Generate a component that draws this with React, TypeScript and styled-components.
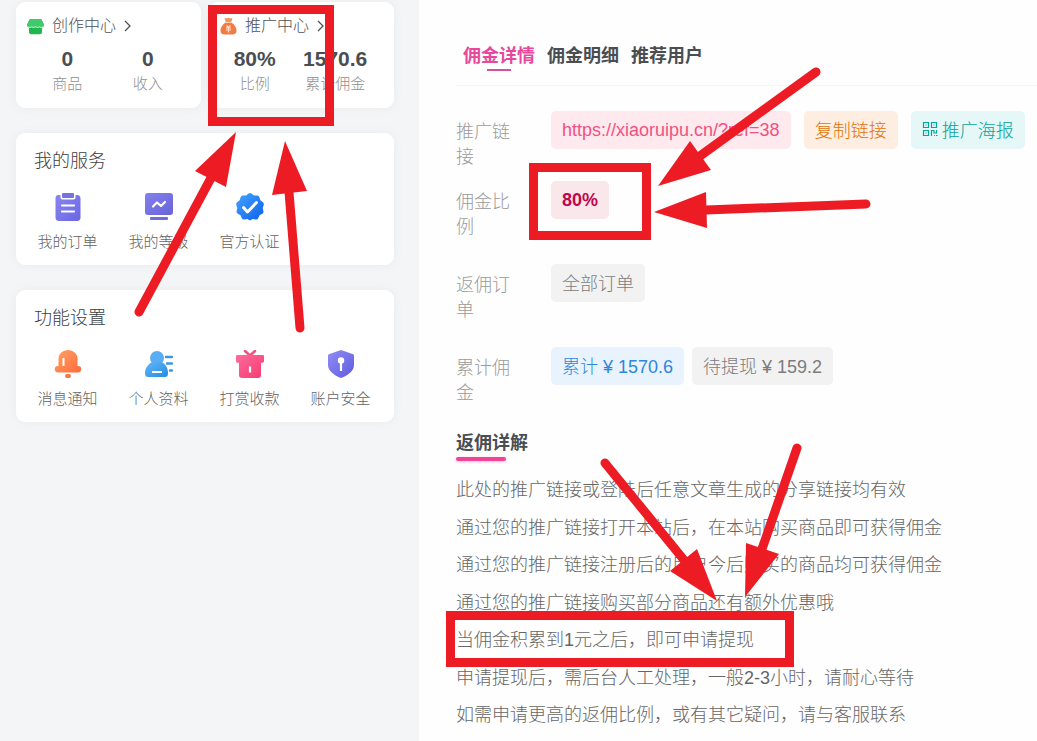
import React from "react";
import styled, { createGlobalStyle } from "styled-components";

const GlobalStyle = createGlobalStyle`
  *, *::before, *::after { box-sizing: border-box; }
  body {
    margin: 0;
    background: #f4f5f7;
    color: #4a4e52;
    font-family: "Liberation Sans", "Noto Sans CJK SC", sans-serif;
    font-weight: 300;
  }
  h2, h3, p, dl, dd, ul { margin: 0; padding: 0; }
  button { border: 0; padding: 0; background: none; font: inherit; color: inherit; cursor: pointer; }
  a { color: inherit; text-decoration: none; }
`;

const Page = styled.div`
  position: relative;
  display: flex;
  min-height: 100vh;
`;

const Sidebar = styled.aside`
  flex: 0 0 419px;
  display: flex;
  flex-direction: column;
  gap: 25px;
  padding: 2px 25px 25px 16px;
`;

const CardPair = styled.div`
  display: grid;
  grid-template-columns: 1fr 1fr;
  gap: 8px;
`;

const Card = styled.section`
  background: #fff;
  border-radius: 9px;
  box-shadow: 0 0 10px rgba(116, 116, 116, 0.08);
`;

const CenterCard = styled(Card)`
  padding: 12px 13px 12px 11px;
`;

const CenterLink = styled.a`
  display: flex;
  align-items: center;
  gap: 8px;
  font-size: 16px;
  line-height: 24px;
  color: #4e5256;

  svg:last-child { margin-left: -4px; }
`;

const Stats = styled.div`
  display: flex;
  justify-content: space-around;
  margin-top: 8px;
  text-align: center;
`;

const StatValue = styled.p`
  font-size: 21px;
  font-weight: 700;
  line-height: 26px;
`;

const StatLabel = styled.p`
  font-size: 15px;
  line-height: 24px;
  color: #909090;
`;

const MenuCard = styled(Card)`
  padding: 15px 8px 11px 6px;
`;

const MenuTitle = styled.h2`
  padding: 0 12px;
  font-size: 18px;
  font-weight: 300;
  line-height: 26px;
  color: #3c4044;
`;

const MenuGrid = styled.nav`
  display: grid;
  grid-template-columns: repeat(4, 1fr);
  margin-top: 19px;
`;

const MenuItem = styled.a`
  display: flex;
  flex-direction: column;
  align-items: center;
  gap: 9px;
  font-size: 15px;
  line-height: 24px;
  color: #636363;
`;

const Main = styled.main`
  flex: 1;
  min-width: 0;
  padding: 37px 0 8px 37px;
  background: #fefefe;
`;

const Tabs = styled.div`
  display: flex;
  gap: 12px;
  padding: 6px 7px 14px;
  border-bottom: 1px solid #f5f5f5;
`;

const Tab = styled.button<{ $active?: boolean }>`
  display: flex;
  flex-direction: column;
  align-items: center;
  font-size: 18px;
  font-weight: 700;
  line-height: 26px;
  color: ${(p) => (p.$active ? "#e8489b" : "#4a4e52")};

  &::after {
    content: "";
    width: 24px;
    height: 2px;
    background: ${(p) => (p.$active ? "#d6519a" : "transparent")};
  }
`;

const Details = styled.dl`
  display: flex;
  flex-direction: column;
  gap: 24px;
  padding: 25px 12px 0 0;
`;

const DetailRow = styled.div<{ $tight?: boolean }>`
  display: flex;
  align-items: flex-start;
  margin-bottom: ${(p) => (p.$tight ? "-13px" : "0")};
`;

const DetailLabel = styled.dt`
  flex: 0 0 95px;
  padding: 9px 36px 0 0;
  font-size: 18px;
  line-height: 25px;
  color: #9a9a9a;
`;

const DetailValue = styled.dd<{ $gap: number }>`
  display: flex;
  gap: ${(p) => p.$gap}px;
  white-space: nowrap;
`;

const tones = {
  pink: ["#fee9ef", "#f0527f"],
  orange: ["#feeee2", "#e07408"],
  teal: ["#e5f7f6", "#08a498"],
  crimson: ["#f9e7ea", "#c3044f"],
  grey: ["#f2f2f2", "#7c7c7c"],
  blue: ["#e8f3fe", "#2f86dc"],
};

const Chip = styled.a<{ $tone: keyof typeof tones; $latin?: boolean; $strong?: boolean }>`
  display: flex;
  align-items: center;
  gap: 3px;
  height: 38px;
  padding: ${(p) => (p.$latin ? "0 11px" : "0 11px 3px")};
  border-radius: 5px;
  background: ${(p) => tones[p.$tone][0]};
  color: ${(p) => tones[p.$tone][1]};
  font-size: 18px;
  font-weight: ${(p) => (p.$strong ? 700 : 300)};
`;

const NotesTitle = styled.h3`
  margin-top: 24px;
  font-size: 18px;
  line-height: 27px;

  &::after {
    content: "";
    display: block;
    width: 50px;
    height: 4px;
    border-radius: 2px;
    background: #f04494;
    box-shadow: 0 1px 3px rgba(253, 83, 161, 0.4);
  }
`;

const Notes = styled.ul`
  display: flex;
  flex-direction: column;
  justify-content: space-between;
  min-height: 251px;
  margin-top: 16px;
  list-style: none;
  font-size: 18px;
  line-height: 26px;
  color: #666;
`;

const Markup = styled.svg`
  position: absolute;
  top: 0;
  left: 0;
  pointer-events: none;
`;

const ShopIcon = () => (
  <svg width="17" height="17" viewBox="0 0 17 17" aria-hidden="true">
    <path d="M4 1h9c1 0 1.500.400 1.800 1.200L16.600 6c.5 1.600-.1 3.300-1.600 3.800V14c0 1.400-.8 2.200-2.200 2.200H4.200C2.800 16.200 2 15.400 2 14V9.800C.500 9.300-.1 7.600.400 6l1.800-3.800C2.500 1.400 3 1 4 1z" fill="#1fb84c" />
    <path d="M4 1h9c1 0 1.500.400 1.800 1.200L16.600 6c.4 1.400 0 2.600-1 3.300H1.400C.400 8.600 0 7.400.400 6l1.800-3.800C2.500 1.400 3 1 4 1z" fill="#3fcb6c" />
    <path d="M1 8.800q1.900 1.500 3.750 0 1.900 1.500 3.750 0 1.900 1.500 3.750 0 1.900 1.500 3.750 0" fill="none" stroke="#d9f8e2" strokeWidth=".9" />
  </svg>
);

const BagIcon = () => (
  <svg width="17" height="18" viewBox="0 0 17 18" aria-hidden="true">
    <path d="M4.500 1.500q1.500-1 2.500 0 1.500-1.500 3 0 1-1 2.500 0L11 5.500H6z" fill="#f3965a" />
    <path d="M5.500 5.500h6c3 2 5 5 5 8 0 2.500-1.500 4-4 4h-8c-2.500 0-4-1.500-4-4 0-3 2-6 5-8z" fill="#f07b43" />
    <path d="M5 5.500h7" stroke="#fbd0b3" strokeWidth="1" />
    <path d="M6.500 8.500l2 2 2-2M6 11h5M6 13h5M8.500 11v4.500" fill="none" stroke="#ffe0cc" strokeWidth="1.200" />
  </svg>
);

const Chevron = () => (
  <svg width="16" height="16" viewBox="0 0 16 16" aria-hidden="true">
    <path d="M5 3l5 5-5 5" fill="none" stroke="#4e5256" strokeWidth="1.300" />
  </svg>
);

const Gradient = ({ id, from, to }: { id: string; from: string; to: string }) => (
  <defs>
    <linearGradient id={id} x1="0" y1="0" x2="1" y2="1">
      <stop offset="0" stopColor={from} />
      <stop offset="1" stopColor={to} />
    </linearGradient>
  </defs>
);

const IconFrame = ({ children }: { children: React.ReactNode }) => (
  <svg width="28" height="28" viewBox="0 0 28 28" aria-hidden="true">{children}</svg>
);

const OrdersIcon = () => (
  <IconFrame>
    <Gradient id="orders" from="#8a86f0" to="#6a66e4" />
    <path d="M4 2h2.500v2.500c0 1.200.800 2 2 2h11c1.200 0 2-.800 2-2V2H23c2.300 0 3.500 1.200 3.500 3.500v19c0 2.300-1.200 3.500-3.500 3.500H5c-2.300 0-3.500-1.200-3.500-3.500v-19C1.500 3.200 2.500 2 4 2z" fill="url(#orders)" />
    <rect x="8" y="0" width="12" height="5" rx="1" fill="#7672e0" />
    <path d="M8 12.500h12M8 18.500h12" stroke="#fff" strokeWidth="2.200" strokeLinecap="round" />
  </IconFrame>
);

const LevelIcon = () => (
  <IconFrame>
    <Gradient id="level" from="#8480ee" to="#6864d8" />
    <rect x="0" y="0" width="28" height="22" rx="3" fill="url(#level)" />
    <rect x="5" y="24" width="18" height="3" rx="1" fill="#706cdc" />
    <path d="M8 13.500l4-4 4 3.500 4-4" fill="none" stroke="#fff" strokeWidth="2.200" strokeLinecap="round" strokeLinejoin="round" />
  </IconFrame>
);

const VerifiedIcon = () => (
  <IconFrame>
    <Gradient id="verified" from="#45a5ff" to="#0b5fec" />
    <path d="M12.600.600q1.400-1 2.800 0l2.600 1.800 3.200.100q1.700.200 2.200 1.800l1 3 2.500 2q1.300 1.100.800 2.700L26.700 15l.700 3.100q.300 1.700-1.200 2.600l-2.700 1.600-1.300 2.900q-.8 1.500-2.500 1.400l-3.100-.500-2.600 1.400-2.600-1.400-3.100.500q-1.700.1-2.500-1.400l-1.300-2.900-2.700-1.600Q.300 19.800.600 18.100L1.300 15 .300 12q-.500-1.600.800-2.700l2.500-2 1-3q.500-1.600 2.200-1.800l3.200-.100z" fill="url(#verified)" />
    <path d="M7.500 14.500l4 4.500 9-9.500" fill="none" stroke="#fff" strokeWidth="3" strokeLinecap="round" strokeLinejoin="round" />
  </IconFrame>
);

const BellIcon = () => (
  <IconFrame>
    <Gradient id="bell" from="#ffa366" to="#ff6a3a" />
    <path d="M14 0c5 0 9.500 3.600 9.500 8.600V16h.700c2 0 3 1.200 3 3s-1 3.500-3 3.500H3.800c-2 0-3-1.500-3-3.500s1-3 3-3h.700V8.600C4.500 3.600 9 0 14 0z" fill="url(#bell)" />
    <rect x="11" y="24" width="6" height="4" rx="2" fill="#f27a45" />
    <path d="M9.500 8v8" stroke="#fff" strokeWidth="2" />
  </IconFrame>
);

const ProfileIcon = () => (
  <IconFrame>
    <Gradient id="profile" from="#64b8fa" to="#238be0" />
    <circle cx="12" cy="8" r="7" fill="#59adf2" />
    <path d="M7.500 12h9c4 2 6.500 6 6.500 11 0 3-1 4-3.500 4h-16C1 27 0 26 0 23c0-5 3-9 7.500-11z" fill="url(#profile)" />
    <path d="M7 22h10" stroke="#fff" strokeWidth="2" />
    <path d="M21 7h6M22 13.500h5M25 20.500h2" stroke="#4096dc" strokeWidth="2.400" strokeLinecap="round" />
  </IconFrame>
);

const GiftIcon = () => (
  <IconFrame>
    <Gradient id="gift" from="#ff6b9d" to="#f53b70" />
    <path d="M9 1l5 4.500L19 1" fill="none" stroke="#f4517f" strokeWidth="2.600" strokeLinecap="round" />
    <path d="M1.500 5h25c1 0 1.500.500 1.500 1.500V11c0 1-.500 1.700-1.500 1.700H25V25c0 2-1 3-3 3H6c-2 0-3-1-3-3V12.700H1.500C.500 12.700 0 12 0 11V6.500C0 5.500.500 5 1.500 5z" fill="url(#gift)" />
    <path d="M14 16.500v6" stroke="#fff" strokeWidth="2.200" />
  </IconFrame>
);

const SecurityIcon = () => (
  <IconFrame>
    <Gradient id="security" from="#918df4" to="#5f5be0" />
    <path d="M14 0l11.500 4c1 .400 1.500 1 1.500 2v9c0 6-6 10.500-13 13C7 25.500 1 21 1 15V6c0-1 .500-1.600 1.500-2z" fill="url(#security)" />
    <circle cx="14" cy="10.500" r="3.200" fill="#fff" />
    <path d="M14 12v9" stroke="#fff" strokeWidth="2.200" />
  </IconFrame>
);

const QrIcon = () => (
  <svg width="17" height="16" viewBox="0 0 17 16" aria-hidden="true" fill="none" stroke="currentColor" strokeWidth="1.200">
    <path d="M1.500 1.500h5v5h-5zM9.500 1.500h5v5h-5zM1.500 9.500h5v5h-5zM3.500 4h1M11.500 4h1M3.500 12h1" />
    <path d="M9.500 15V9.500h2.500v2.500h2.500V9M12 14.500h1M14 14.500h1.500" />
  </svg>
);

const centers = [
  { title: "创作中心", Icon: ShopIcon, stats: [["0", "商品"], ["0", "收入"]] },
  { title: "推广中心", Icon: BagIcon, stats: [["80%", "比例"], ["1570.6", "累计佣金"]] },
];

const menus = [
  {
    title: "我的服务",
    items: [["我的订单", OrdersIcon], ["我的等级", LevelIcon], ["官方认证", VerifiedIcon]],
  },
  {
    title: "功能设置",
    items: [["消息通知", BellIcon], ["个人资料", ProfileIcon], ["打赏收款", GiftIcon], ["账户安全", SecurityIcon]],
  },
] as { title: string; items: [string, React.FC][] }[];

const notes = [
  "此处的推广链接或登陆后任意文章生成的分享链接均有效",
  "通过您的推广链接打开本站后，在本站购买商品即可获得佣金",
  "通过您的推广链接注册后的用户今后购买的商品均可获得佣金",
  "通过您的推广链接购买部分商品还有额外优惠哦",
  "当佣金积累到1元之后，即可申请提现",
  "申请提现后，需后台人工处理，一般2-3小时，请耐心等待",
  "如需申请更高的返佣比例，或有其它疑问，请与客服联系",
];

const boxes = [
  [208, 5, 126, 121],
  [529, 163, 122, 77],
  [446, 611, 348, 56],
];

// Each arrow: shaft from its round tail to the head's base, then the head's corners.
const arrows = [
  { shaft: "M139 312L211 178", head: "236,132 195,171 226,187" },
  { shaft: "M300 328L289 192", head: "285,141 272,195 307,191" },
  { shaft: "M816 72L700 156", head: "658,186 690,141 711,170" },
  { shaft: "M866 204L706 210", head: "654,212 706,192 707,228" },
  { shaft: "M605 463L684 560", head: "717,601 670,571 697,549" },
  { shaft: "M797 448L762 549", head: "745,597 746,543 779,554" },
];

export default function App() {
  return (
    <>
      <GlobalStyle />
      <Page>
        <Sidebar>
          <CardPair>
            {centers.map(({ title, Icon, stats }) => (
              <CenterCard key={title}>
                <CenterLink href="#">
                  <Icon />
                  {title}
                  <Chevron />
                </CenterLink>
                <Stats>
                  {stats.map(([value, label]) => (
                    <div key={label}>
                      <StatValue>{value}</StatValue>
                      <StatLabel>{label}</StatLabel>
                    </div>
                  ))}
                </Stats>
              </CenterCard>
            ))}
          </CardPair>
          {menus.map(({ title, items }) => (
            <MenuCard key={title}>
              <MenuTitle>{title}</MenuTitle>
              <MenuGrid aria-label={title}>
                {items.map(([label, Icon]) => (
                  <MenuItem href="#" key={label}>
                    <Icon />
                    {label}
                  </MenuItem>
                ))}
              </MenuGrid>
            </MenuCard>
          ))}
        </Sidebar>

        <Main>
          <Tabs role="tablist">
            <Tab role="tab" aria-selected="true" $active>佣金详情</Tab>
            <Tab role="tab" aria-selected="false">佣金明细</Tab>
            <Tab role="tab" aria-selected="false">推荐用户</Tab>
          </Tabs>

          <Details>
            <DetailRow $tight>
              <DetailLabel>推广链接</DetailLabel>
              <DetailValue $gap={13}>
                <Chip href="#" $tone="pink" $latin>https://xiaoruipu.cn/?ref=38</Chip>
                <Chip as="button" $tone="orange">复制链接</Chip>
                <Chip as="button" $tone="teal"><QrIcon />推广海报</Chip>
              </DetailValue>
            </DetailRow>
            <DetailRow>
              <DetailLabel>佣金比例</DetailLabel>
              <DetailValue $gap={8}>
                <Chip as="span" $tone="crimson" $latin $strong>80%</Chip>
              </DetailValue>
            </DetailRow>
            <DetailRow>
              <DetailLabel>返佣订单</DetailLabel>
              <DetailValue $gap={8}>
                <Chip href="#" $tone="grey">全部订单</Chip>
              </DetailValue>
            </DetailRow>
            <DetailRow>
              <DetailLabel>累计佣金</DetailLabel>
              <DetailValue $gap={8}>
                <Chip as="span" $tone="blue">累计 ¥ 1570.6</Chip>
                <Chip as="span" $tone="grey">待提现 ¥ 159.2</Chip>
              </DetailValue>
            </DetailRow>
          </Details>

          <NotesTitle>返佣详解</NotesTitle>
          <Notes>
            {notes.map((note) => (
              <li key={note}>{note}</li>
            ))}
          </Notes>
        </Main>

        <Markup width="1037" height="741" viewBox="0 0 1037 741" aria-hidden="true">
          {boxes.map(([x, y, w, h]) => (
            <rect key={x} x={x + 4.5} y={y + 4.5} width={w - 9} height={h - 9} fill="none" stroke="#ed1c24" strokeWidth="9" />
          ))}
          {arrows.map(({ shaft, head }) => (
            <g key={shaft}>
              <path d={shaft} stroke="#ed1c24" strokeWidth="9" strokeLinecap="round" />
              <polygon points={head} fill="#ed1c24" />
            </g>
          ))}
        </Markup>
      </Page>
    </>
  );
}
